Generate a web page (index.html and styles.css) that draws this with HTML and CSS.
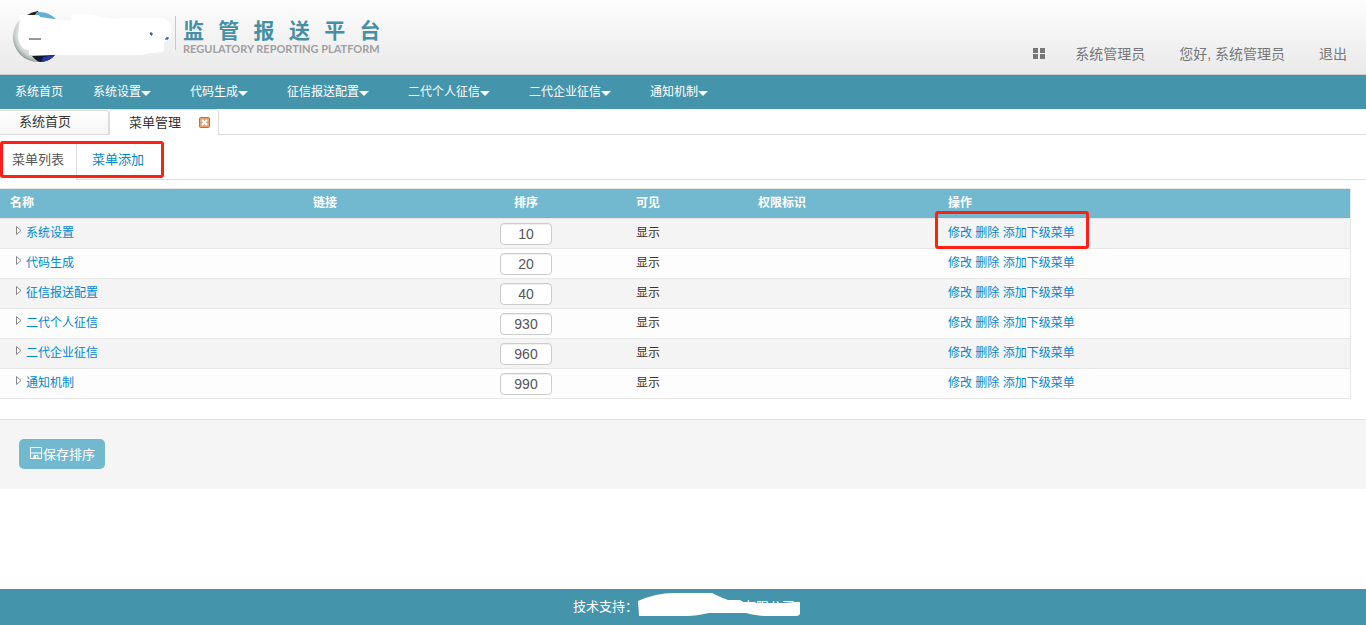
FILE: index.html
```html
<!DOCTYPE html>
<html lang="zh-CN">
<head>
<meta charset="utf-8">
<title>监管报送平台</title>
<link rel="stylesheet" href="styles.css">
</head>
<body>
<header class="header">
  <div class="brand">
    <svg class="logo" width="160" height="56" viewBox="0 0 160 56" aria-hidden="true">
      <defs>
        <radialGradient id="ball" cx="55%" cy="42%" r="60%">
          <stop offset="0" stop-color="#ffffff"/>
          <stop offset="0.6" stop-color="#f4f6f5"/>
          <stop offset="0.85" stop-color="#ccd2cf"/>
          <stop offset="1" stop-color="#8d9491"/>
        </radialGradient>
      </defs>
      <circle cx="26" cy="28" r="25" fill="url(#ball)"/>
      <path d="M15 6Q20 3 26 2L28 7L14 7z" fill="#2e211b"/>
      <path d="M25 3Q36 2 44 10L40 12L22 7z" fill="#65aed3"/>
      <path d="M20 47L43 46Q37 53 28 53Q24 52 20 47z" fill="#14182a"/>
      <path d="M31 48L43 46Q38 52 29 53z" fill="#2438a5"/>
      <path d="M8 6L27 6L28 8L42 10L59 12L60 5L77 5Q90 8 102 10L113 9H152Q158 12 159 17V29L152 33V42Q148 44 138 44L130 46H17V41L12 40Q7 36 6 28z" fill="#fff"/>
      <path d="M17 30h12" stroke="#26332c" stroke-width="1" fill="none"/>
      <path d="M138 24h2v2h-1zM153 30h3v-2M155 28v2" stroke="#173b86" stroke-width="1" fill="none"/>
    </svg>
    <div class="brand-text">
      <div class="brand-name">监   管   报   送   平   台</div>
      <div class="brand-en">REGULATORY REPORTING PLATFORM</div>
    </div>
  </div>
  <div class="user-links">
    <a href="#" class="theme" aria-label="主题">
      <svg width="14" height="12" viewBox="0 0 14 12"><path d="M1 0h5v5H1zM8 0h5v5H8zM1 6h5v5H1zM8 6h5v5H8z" fill="#777"/></svg>
    </a>
    <a href="#">系统管理员</a>
    <a href="#">您好, 系统管理员</a>
    <a href="#">退出</a>
  </div>
</header>
<nav class="nav">
  <a href="#">系统首页</a>
  <a href="#" class="drop">系统设置</a>
  <a href="#" class="drop">代码生成</a>
  <a href="#" class="drop">征信报送配置</a>
  <a href="#" class="drop">二代个人征信</a>
  <a href="#" class="drop">二代企业征信</a>
  <a href="#" class="drop">通知机制</a>
</nav>
<div class="tabs">
  <a href="#" class="tab">系统首页</a>
  <div class="tab current"><a href="#">菜单管理</a>
    <button type="button" class="close" aria-label="关闭">
      <svg width="11" height="11" viewBox="0 0 11 11"><rect x="0.5" y="0.5" width="10" height="10" rx="1" fill="#e5a274" stroke="#b96f3f"/><path d="M3 3l5 5M8 3l-5 5" stroke="#fff" stroke-width="2"/></svg>
    </button>
  </div>
</div>
<main>
  <div class="subtabs">
    <div class="subtab-group marked">
      <a href="#" class="subtab active">菜单列表</a>
      <a href="#" class="subtab">菜单添加</a>
    </div>
  </div>
  <form>
    <table class="menu-table">
      <colgroup><col class="c-name"><col class="c-link"><col class="c-sort"><col class="c-show"><col class="c-perm"><col></colgroup>
      <thead>
        <tr><th>名称</th><th>链接</th><th class="center">排序</th><th>可见</th><th>权限标识</th><th>操作</th></tr>
      </thead>
      <tbody>
        <tr><td><svg class="arrow" width="6" height="9" viewBox="0 0 6 9"><path d="M0.5 0.5v8L5 4.500z"/></svg><a href="#">系统设置</a></td><td></td><td class="center"><input type="text" value="10" aria-label="系统设置 排序"></td><td>显示</td><td></td><td><span class="actions marked"><a href="#">修改</a> <a href="#">删除</a> <a href="#">添加下级菜单</a></span></td></tr>
        <tr><td><svg class="arrow" width="6" height="9" viewBox="0 0 6 9"><path d="M0.5 0.5v8L5 4.500z"/></svg><a href="#">代码生成</a></td><td></td><td class="center"><input type="text" value="20" aria-label="代码生成 排序"></td><td>显示</td><td></td><td><span class="actions"><a href="#">修改</a> <a href="#">删除</a> <a href="#">添加下级菜单</a></span></td></tr>
        <tr><td><svg class="arrow" width="6" height="9" viewBox="0 0 6 9"><path d="M0.5 0.5v8L5 4.500z"/></svg><a href="#">征信报送配置</a></td><td></td><td class="center"><input type="text" value="40" aria-label="征信报送配置 排序"></td><td>显示</td><td></td><td><span class="actions"><a href="#">修改</a> <a href="#">删除</a> <a href="#">添加下级菜单</a></span></td></tr>
        <tr><td><svg class="arrow" width="6" height="9" viewBox="0 0 6 9"><path d="M0.5 0.5v8L5 4.500z"/></svg><a href="#">二代个人征信</a></td><td></td><td class="center"><input type="text" value="930" aria-label="二代个人征信 排序"></td><td>显示</td><td></td><td><span class="actions"><a href="#">修改</a> <a href="#">删除</a> <a href="#">添加下级菜单</a></span></td></tr>
        <tr><td><svg class="arrow" width="6" height="9" viewBox="0 0 6 9"><path d="M0.5 0.5v8L5 4.500z"/></svg><a href="#">二代企业征信</a></td><td></td><td class="center"><input type="text" value="960" aria-label="二代企业征信 排序"></td><td>显示</td><td></td><td><span class="actions"><a href="#">修改</a> <a href="#">删除</a> <a href="#">添加下级菜单</a></span></td></tr>
        <tr><td><svg class="arrow" width="6" height="9" viewBox="0 0 6 9"><path d="M0.5 0.5v8L5 4.500z"/></svg><a href="#">通知机制</a></td><td></td><td class="center"><input type="text" value="990" aria-label="通知机制 排序"></td><td>显示</td><td></td><td><span class="actions"><a href="#">修改</a> <a href="#">删除</a> <a href="#">添加下级菜单</a></span></td></tr>
      </tbody>
    </table>
    <div class="form-actions">
      <button type="submit" class="save">
        <svg width="14" height="14" viewBox="0 0 14 14"><path d="M1.500 1.500h11v11h-11zM2 7h10M5 12V9.500h4V12" fill="none" stroke="#fff" stroke-width="1"/><path d="M1 1h1v12H1zM5 10h2v3H5z" fill="#fff"/></svg>保存排序</button>
    </div>
  </form>
</main>
<footer class="footer">
  <span>技术支持：</span>
  <span class="company">
    <span class="company-name">有限公司</span>
    <svg class="cover" width="163" height="25" viewBox="0 0 163 25" aria-hidden="true"><path d="M0 9Q18 1 36 1H74Q84 6 90 8H102L107 11H146L158 10H162V22Q161 24 158 24H126Q115 23 108 21H71Q58 24 49 24H1z" fill="#fff"/></svg>
  </span>
</footer>
</body>
</html>
```
FILE: styles.css
```css
* { box-sizing: border-box; }
body {
  margin: 0;
  min-height: 100vh;
  display: flex;
  flex-direction: column;
  background: #fff;
  color: #333;
  font: 12px/20px "Liberation Sans", "Noto Sans CJK SC", sans-serif;
}
a { color: #0088cc; text-decoration: none; }
svg { display: block; }
main { flex: 1; }

.header {
  display: flex;
  justify-content: space-between;
  height: 75px;
  border-bottom: 1px solid #ccc;
  background: linear-gradient(#fdfdfd, #e9e9e9);
}
.brand { display: flex; padding: 9px 0 0 12px; }
.brand-text {
  height: 34px;
  margin: 7px 0 0 3px;
  padding-left: 7px;
  border-left: 1px solid #c8c8c8;
}
.brand-name {
  white-space: pre;
  color: #4690a5;
  font: bold 21px/26px "Noto Sans CJK SC", sans-serif;
}
.brand-en {
  color: #a0a0a0;
  font: bold 11px/14px Lato, sans-serif;
  white-space: nowrap;
}
.user-links {
  display: flex;
  align-items: center;
  gap: 34px;
  padding: 34px 19px 0 0;
  font-size: 14px;
}
.user-links a { color: #777; }
.user-links .theme { margin-right: -5px; }

.nav { display: flex; height: 34px; background: #4494ac; }
.nav a { padding: 0 15px; color: #fff; line-height: 34px; }
.nav .drop { display: flex; align-items: center; padding-right: 24px; }
.nav .drop::after {
  content: "";
  margin-top: 3px;
  border: 5px solid transparent;
  border-top-color: #fff;
  border-bottom: 0;
}

.tabs {
  display: flex;
  align-items: flex-end;
  height: 26px;
  border-bottom: 1px solid #ddd;
  font-size: 13px;
}
.tab {
  width: 109px;
  height: 24px;
  padding-left: 19px;
  border: solid #ddd;
  border-width: 1px 1px 0 0;
  border-radius: 0 4px 0 0;
  background: linear-gradient(#fff, #f5f5f5);
  color: #333;
  line-height: 22px;
}
.tab a { color: #333; }
.tab.current {
  display: flex;
  align-items: center;
  gap: 18px;
  width: 110px;
  height: 26px;
  margin-bottom: -1px;
  padding-left: 19px;
  border-left-width: 1px;
  border-radius: 4px 4px 0 0;
  background: #fff;
}
.close { padding: 0; border: 0; background: none; }

.subtabs { padding-top: 6px; border-bottom: 1px solid #ddd; font-size: 13px; }
.subtab-group { display: inline-flex; height: 38px; vertical-align: top; }
.subtab { width: 87px; padding-left: 15px; line-height: 38px; }
.subtab.active {
  width: 77px;
  height: 39px;
  padding-left: 12px;
  border: solid #ddd;
  border-width: 1px 1px 0 0;
  border-radius: 0 4px 0 0;
  background: #fff;
  color: #555;
  line-height: 36px;
}
.marked { position: relative; }
.marked::after {
  content: "";
  position: absolute;
  inset: 0 0 1px;
  border: 3px solid #ff2013;
  border-radius: 3px;
  pointer-events: none;
}
.actions.marked::after { inset: -15px -14px -9px -13px; }

.menu-table {
  width: calc(100% - 15px);
  margin-top: 8px;
  table-layout: fixed;
  border: 1px solid #e7e7e7;
  border-left: 0;
  border-spacing: 0;
}
.c-name { width: 303px; }
.c-link { width: 123px; }
.c-sort { width: 200px; }
.c-show { width: 122px; }
.c-perm { width: 190px; }
.menu-table th {
  height: 29px;
  padding: 0 10px 2px;
  background: #72b8cf;
  color: #fff;
  text-align: left;
}
.menu-table td {
  height: 30px;
  padding: 0 10px 1px;
  border-top: 1px solid #e7e7e7;
  background: #fdfdfd;
}
.menu-table tbody tr:nth-child(odd) td { background: #f4f4f4; }
.menu-table .center { text-align: center; }
.arrow {
  display: inline-block;
  margin: 0 4px 2px 6px;
  fill: #fff;
  stroke: #888;
}
.menu-table input {
  display: block;
  width: 52px;
  height: 22px;
  margin: 2px auto 0;
  padding: 0;
  border: 1px solid #ccc;
  border-radius: 4px;
  color: #555;
  font: 14px "Liberation Sans", Arial, sans-serif;
  text-align: center;
  box-shadow: inset 0 1px 1px #eee;
}

.form-actions {
  margin: 20px 0;
  padding: 19px 19px 20px;
  border-top: 1px solid #e5e5e5;
  background: #f5f5f5;
}
.save {
  display: flex;
  align-items: center;
  height: 30px;
  padding: 0 10px 2px;
  border: 0;
  border-radius: 5px;
  background: #72b8cf;
  color: #fff;
  font: 13px "Liberation Sans", "Noto Sans CJK SC", sans-serif;
}

.footer {
  display: flex;
  justify-content: center;
  align-items: center;
  height: 36px;
  padding: 0 0 2px 8px;
  background: #4494ac;
  color: #fff;
  font: 13px/20px "Noto Sans CJK SC", sans-serif;
}
.company { position: relative; width: 163px; padding-left: 105px; }
.company-name { display: block; white-space: nowrap; }
.cover { position: absolute; left: 0; top: -4px; }
```
